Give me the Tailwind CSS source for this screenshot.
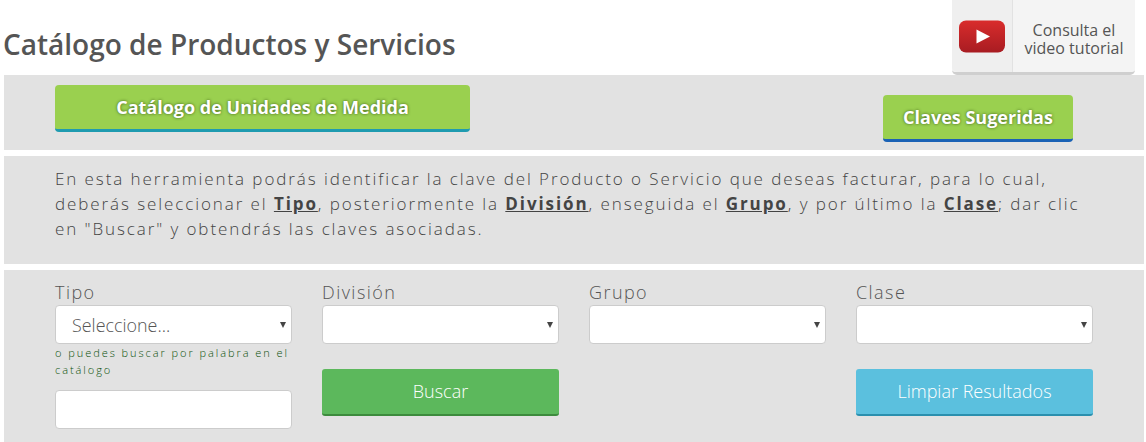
<!DOCTYPE html>
<html lang="es">
<head>
  <meta charset="UTF-8">
  <meta name="viewport" content="width=device-width, initial-scale=1.0">
  <title>Catálogo de Productos y Servicios</title>
  <script src="https://cdn.jsdelivr.net/npm/@tailwindcss/browser@4"></script>
</head>
<body class="bg-white font-['Open_Sans',sans-serif] text-[#555] overflow-hidden">
  <div class="w-[1146px] h-[442px] overflow-hidden">
    <!-- header -->
    <div class="flex justify-between items-start h-[75px] pl-1 pr-[11px]">
      <h1 class="mt-[26px] -ml-px text-[28px] leading-[36px] font-semibold text-[#555]">Catálogo de Productos y Servicios</h1>
      <a class="flex w-[183px] h-[75px] rounded-b-[5px] bg-[#f4f4f4] border-b-[3px] border-[#cfcfcf]">
        <div class="w-[61px] flex items-center justify-center rounded-bl-[5px] bg-[#efefef] border-r border-[#e2e2e2]">
          <svg width="46" height="33" viewBox="0 0 46 33">
            <defs>
              <linearGradient id="yt" x1="0" y1="0" x2="0" y2="1">
                <stop offset="0" stop-color="#d92c2c"/>
                <stop offset="1" stop-color="#a81c22"/>
              </linearGradient>
            </defs>
            <rect width="46" height="32" y="0.5" rx="7" fill="url(#yt)"/>
            <path d="M17.5 9.5 L31 16.5 L17.5 23.5 Z" fill="#fff"/>
          </svg>
        </div>
        <div class="flex-1 pt-[21px] text-center text-[16px] leading-[18px] text-[#555] font-normal">Consulta el<br>video tutorial</div>
      </a>
    </div>

    <div class="w-[1140px] ml-1 flex flex-col gap-[6px]">
      <!-- buttons -->
      <div class="h-[75px] bg-[#e2e2e2] relative flex justify-between pl-[51px] pr-[71px] pt-[10px]">
        <button class="w-[415px] h-[47px] rounded-[4px] bg-[#9ad04f] border-b-[3px] border-[#1f9bb0] text-white text-[18px] font-bold [text-shadow:0_0_3px_rgba(50,80,20,0.9)] flex items-center justify-center">Catálogo de Unidades de Medida</button>
        <button class="w-[190px] h-[47px] mt-[10px] rounded-[4px] bg-[#9ad04f] border-b-[3px] border-[#1a62b5] text-white text-[18px] font-bold [text-shadow:0_0_3px_rgba(50,80,20,0.9)] flex items-center justify-center">Claves Sugeridas</button>
      </div>

      <!-- description -->
      <div class="h-[108px] bg-[#e2e2e2] pl-[51px] pr-[50px] pt-[10px]">
        <p class="text-[17px] leading-[25px] tracking-[1.91px] font-light text-[#444]">En esta herramienta podrás identificar la clave del Producto o Servicio que deseas facturar, para lo cual, deberás seleccionar el <b class="font-bold underline">Tipo</b>, posteriormente la <b class="font-bold underline">División</b>, enseguida el <b class="font-bold underline">Grupo</b>, y por último la <b class="font-bold underline">Clase</b>; dar clic en "Buscar" y obtendrás las claves asociadas.</p>
      </div>

      <!-- form -->
      <div class="h-[172px] bg-[#e2e2e2] px-[51px] pt-[11px] grid grid-cols-4 gap-x-[30px] content-start">
        <div class="flex flex-col">
          <label class="text-[18px] leading-[22px] tracking-[1.44px] font-light text-[#555] mb-[2px]">Tipo</label>
          <div class="h-[39px] rounded-[4px] bg-white border border-[#ccc] flex items-center justify-between pl-4 pr-[5px]">
            <span class="pt-px text-[17.9px] font-light text-[#555]">Seleccione...</span>
            <span class="w-0 h-0 border-x-[3px] border-x-transparent border-t-[6px] border-t-[#444]"></span>
          </div>
          <p class="text-[11px] leading-[17px] tracking-[1.95px] font-light text-[#0a500a]">o puedes buscar por palabra en el catálogo</p>
          <input type="text" class="mt-[12px] h-[39px] rounded-[4px] bg-white border border-[#ccc]">
        </div>
        <div class="flex flex-col">
          <label class="text-[18px] leading-[22px] tracking-[1.44px] font-light text-[#555] mb-[2px]">División</label>
          <div class="h-[39px] rounded-[4px] bg-white border border-[#ccc] flex items-center justify-end pr-[5px]">
            <span class="w-0 h-0 border-x-[3px] border-x-transparent border-t-[6px] border-t-[#444]"></span>
          </div>
          <button class="mt-[25px] h-[47px] rounded-[3px] bg-[#5cb85c] border-b-[2px] border-[#3d8b3d] text-white text-[18px] font-light">Buscar</button>
        </div>
        <div class="flex flex-col">
          <label class="text-[18px] leading-[22px] tracking-[1.44px] font-light text-[#555] mb-[2px]">Grupo</label>
          <div class="h-[39px] rounded-[4px] bg-white border border-[#ccc] flex items-center justify-end pr-[5px]">
            <span class="w-0 h-0 border-x-[3px] border-x-transparent border-t-[6px] border-t-[#444]"></span>
          </div>
        </div>
        <div class="flex flex-col">
          <label class="text-[18px] leading-[22px] tracking-[1.44px] font-light text-[#555] mb-[2px]">Clase</label>
          <div class="h-[39px] rounded-[4px] bg-white border border-[#ccc] flex items-center justify-end pr-[5px]">
            <span class="w-0 h-0 border-x-[3px] border-x-transparent border-t-[6px] border-t-[#444]"></span>
          </div>
          <button class="mt-[25px] h-[47px] rounded-[3px] bg-[#5bc0de] border-b-[2px] border-[#2a8fae] text-white text-[18px] font-light">Limpiar Resultados</button>
        </div>
      </div>
    </div>
  </div>
</body>
</html>
